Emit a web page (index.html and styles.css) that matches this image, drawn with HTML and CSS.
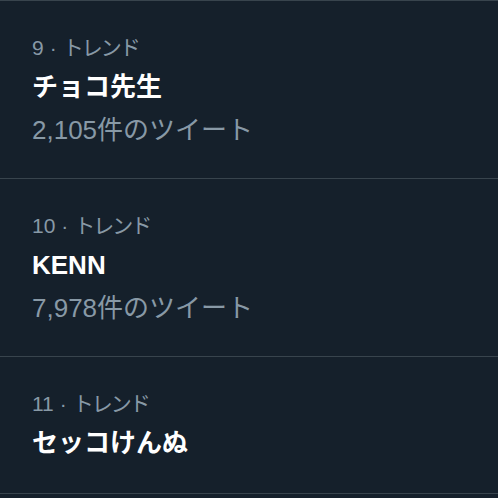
FILE: index.html
```html
<!DOCTYPE html>
<html>
<head>
<meta charset="utf-8">
<link rel="stylesheet" href="styles.css">
</head>
<body>
<div class="list">
  <div class="trend">
    <div class="meta">9<span class="dot">·</span><span class="kind">トレンド</span></div>
    <div class="title">チョコ先生</div>
    <div class="count">2,105件のツイート</div>
  </div>
  <div class="trend">
    <div class="meta">10<span class="dot">·</span><span class="kind">トレンド</span></div>
    <div class="title">KENN</div>
    <div class="count">7,978件のツイート</div>
  </div>
  <div class="trend">
    <div class="meta">11<span class="dot">·</span><span class="kind">トレンド</span></div>
    <div class="title">セッコけんぬ</div>
  </div>
</div>
</body>
</html>
```

FILE: styles.css
```css
html, body {
  margin: 0;
  padding: 0;
  background: #15202b;
}
body {
  font-family: "Liberation Sans", "Noto Sans CJK JP", sans-serif;
  height: 498px;
  overflow: hidden;
}
.list {
  border-top: 1px solid #38444d;
}
.trend {
  padding: 31px 16px 27px 32px;
  border-bottom: 1px solid #38444d;
}
.meta {
  font-size: 21px;
  line-height: 32px;
  color: #8899a6;
}
.dot {
  margin: 0 6px 0 6px;
}
.kind {
  letter-spacing: -2px;
}
.title {
  font-size: 26px;
  line-height: 46px;
  font-weight: 700;
  color: #ffffff;
}
.count {
  font-size: 26px;
  line-height: 41px;
  color: #8899a6;
}
```
